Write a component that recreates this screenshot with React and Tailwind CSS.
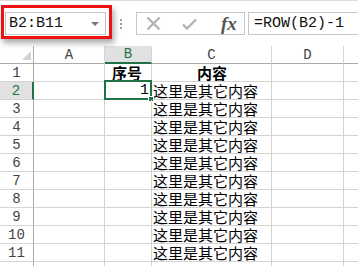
const mono = { fontFamily: '"Liberation Mono", "DejaVu Sans Mono", monospace' };

const rows = Array.from({ length: 11 }, (_, i) => i + 1);

function HeaderCell({ children, active, last }) {
    return (
        <div
            className={`flex items-center justify-center text-[14px] leading-none border-r border-[#d5d5d5] ${active ? 'bg-[#e1e1e1] text-[#217346] border-b-2 border-b-[#217346]' : 'border-b border-b-[#ababab] text-[#444]'} ${last ? 'border-r-0' : ''}`}
            style={mono}
        >
            {children}
        </div>
    );
}

export default function App() {
    return (
        <div className="relative w-[358px] h-[266px] overflow-hidden bg-white border-t border-[#dcdcdc]" style={{ fontFamily: '"Noto Sans CJK SC", sans-serif' }}>
            {/* Formula bar */}
            <div className="flex items-start h-[45px] pt-[11px] pl-[5px]">
                <div className="w-[101px] h-[23px] border border-[#c6c6c6] flex items-center justify-between pl-[3px] pr-[6px]">
                    <span className="text-[15px] text-[#111] leading-none" style={mono}>B2:B11</span>
                    <span className="w-0 h-0 border-l-[4px] border-r-[4px] border-t-[4px] border-l-transparent border-r-transparent border-t-[#777]" />
                </div>
                <div className="ml-[14px] h-[23px] flex flex-col items-center justify-center gap-[2px]">
                    <span className="w-[2px] h-[2px] bg-[#a0a0a0]" />
                    <span className="w-[2px] h-[2px] bg-[#a0a0a0]" />
                    <span className="w-[2px] h-[2px] bg-[#a0a0a0]" />
                </div>
                <div className="ml-[14px] w-[109px] h-[23px] border border-[#c6c6c6] flex items-center">
                    <svg className="ml-[9px]" width="15" height="15" viewBox="0 0 15 15">
                        <path d="M1.5 1.5L13.5 13.5M13.5 1.5L1.5 13.5" stroke="#b4b4b4" strokeWidth="2.4" fill="none" />
                    </svg>
                    <svg className="ml-[21px]" width="15" height="12" viewBox="0 0 15 12">
                        <path d="M1 6.5L5 10.5L14 1.5" stroke="#b4b4b4" strokeWidth="2.4" fill="none" />
                    </svg>
                    <span className="ml-[24px] text-[19px] italic font-bold text-[#555] leading-none" style={{ fontFamily: '"Liberation Serif", serif' }}>fx</span>
                </div>
                <div className="ml-[3px] flex-1 h-[23px] border border-[#c6c6c6] border-r-0 flex items-center pl-[5px]">
                    <span className="text-[15px] text-[#111] leading-none" style={mono}>=ROW(B2)-1</span>
                </div>
            </div>

            {/* Red annotation around name box */}
            <div className="absolute left-[1px] top-[4px] w-[111px] h-[34px] border-[3px] border-[#ee1111] shadow-[2px_4px_6px_rgba(0,0,0,0.35)]" />

            {/* Sheet grid */}
            <div className="grid grid-cols-[34px_71px_47px_120px_72px_1fr] auto-rows-[18px] leading-[17px]">
                {/* Column header row */}
                <div className="relative border-r border-b border-[#ababab]">
                    <svg className="absolute right-[2px] bottom-[3px]" width="9" height="9" viewBox="0 0 9 9">
                        <path d="M9 0L9 9L0 9Z" fill="#d2d2d2" />
                    </svg>
                </div>
                <HeaderCell>A</HeaderCell>
                <HeaderCell active>B</HeaderCell>
                <HeaderCell>C</HeaderCell>
                <HeaderCell>D</HeaderCell>
                <HeaderCell last />

                {rows.map((r) => {
                    const sel = r === 2;
                    return [
                        <div
                            key={`h${r}`}
                            className={`flex items-center justify-center text-[14px] leading-none border-b border-[#d5d5d5] ${sel ? 'bg-[#e1e1e1] text-[#217346] border-r-2 border-r-[#217346]' : 'text-[#444] border-r border-r-[#ababab]'}`}
                            style={mono}
                        >
                            {r}
                        </div>,
                        <div key={`a${r}`} className="border-r border-b border-[#d4d4d4]" />,
                        <div key={`b${r}`} className="relative border-r border-b border-[#d4d4d4] flex items-center justify-end pr-[2px] text-[15px] text-black">
                            {r === 1 && <span className="w-full text-center font-bold">序号</span>}
                            {r === 2 && <span style={mono}>1</span>}
                            {sel && (
                                <div className="absolute -left-[1px] -top-[2px] -right-[1px] -bottom-[1px] border-2 border-[#217346]">
                                    <span className="absolute -right-[4px] -bottom-[4px] w-[6px] h-[6px] bg-[#217346] border border-white" />
                                </div>
                            )}
                        </div>,
                        <div key={`c${r}`} className="border-r border-b border-[#d4d4d4] flex items-center pl-[1px] text-[15px] text-black whitespace-nowrap">
                            {r === 1 ? <span className="w-full text-center font-bold">内容</span> : '这里是其它内容'}
                        </div>,
                        <div key={`d${r}`} className="border-r border-b border-[#d4d4d4]" />,
                        <div key={`e${r}`} className="border-b border-[#d4d4d4]" />,
                    ];
                })}
                <div className="border-r border-[#ababab]" />
                <div className="border-r border-[#d4d4d4]" />
                <div className="border-r border-[#d4d4d4]" />
                <div className="border-r border-[#d4d4d4]" />
                <div className="border-r border-[#d4d4d4]" />
                <div />
            </div>
        </div>
    );
}
